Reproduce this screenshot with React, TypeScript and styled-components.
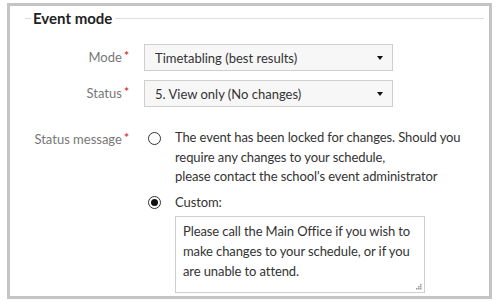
import React from "react";
import styled, { createGlobalStyle } from "styled-components";

const GlobalStyle = createGlobalStyle`
  body {
    margin: 0;
    background: #ffffff;
    font-family: Lato, "Open Sans", sans-serif;
  }
`;

const Frame = styled.div`
  box-sizing: border-box;
  width: 485px;
  height: 296px;
  margin: 3px 0 0 7px;
  border: 3px solid #c4c4c4;
  padding: 0 5px 0 15px;
`;

const Legend = styled.div`
  display: flex;
  align-items: center;
  height: 24px;
  &::before,
  &::after {
    content: "";
    height: 1px;
    background: #dedede;
  }
  &::before {
    width: 6px;
    margin-right: 2px;
  }
  &::after {
    flex: 1;
    margin-left: 3px;
  }
`;

const LegendText = styled.span`
  font-size: 15px;
  font-weight: 700;
  color: #222;
`;

const Form = styled.div`
  display: flex;
  flex-direction: column;
  margin-top: 14px;
  margin-left: -15px;
`;

const Row = styled.div<{ $gap?: number }>`
  display: flex;
  align-items: flex-start;
  gap: 15px;
  margin-top: ${(p) => p.$gap ?? 0}px;
`;

const Label = styled.div<{ $top?: number }>`
  width: 119px;
  text-align: right;
  font-size: 13px;
  color: #777;
  padding-top: ${(p) => p.$top ?? 0}px;
  line-height: 20px;
  white-space: nowrap;
`;

const Star = styled.span`
  color: #d33;
  font-size: 12px;
  font-weight: 700;
  vertical-align: 2px;
  margin-left: 2px;
`;

const Select = styled.div`
  box-sizing: border-box;
  width: 249px;
  height: 27px;
  display: flex;
  align-items: center;
  justify-content: space-between;
  padding: 0 9px 0 10px;
  background: #f7f7f7;
  border: 1px solid #cfcfcf;
  font-size: 13px;
  color: #333;
`;

const Caret = styled.span`
  width: 0;
  height: 0;
  border-left: 3.5px solid transparent;
  border-right: 3.5px solid transparent;
  border-top: 4px solid #111;
`;

const Options = styled.div`
  display: flex;
  flex-direction: column;
  padding-left: 4px;
`;

const Option = styled.div<{ $gap?: number }>`
  display: flex;
  align-items: flex-start;
  gap: 14px;
  margin-top: ${(p) => p.$gap ?? 0}px;
  font-size: 13px;
  line-height: 19.5px;
  color: #333;
  letter-spacing: -0.1px;
`;

const Radio = styled.span<{ $checked?: boolean }>`
  box-sizing: border-box;
  flex: none;
  width: 13px;
  height: 13px;
  margin-top: 3.5px;
  border-radius: 50%;
  border: 1px solid #333;
  display: flex;
  align-items: center;
  justify-content: center;
  &::after {
    content: "";
    width: 7px;
    height: 7px;
    border-radius: 50%;
    background: ${(p) => (p.$checked ? "#111" : "transparent")};
  }
`;

const TextArea = styled.div`
  position: relative;
  box-sizing: border-box;
  width: 250px;
  height: 77px;
  margin: 4px 0 0 27px;
  padding: 4px 7px;
  border: 1px solid #cfcfcf;
  font-size: 13px;
  line-height: 20px;
  color: #333;
  letter-spacing: -0.1px;
`;

const Grip = styled.svg`
  position: absolute;
  right: 2px;
  bottom: 2px;
`;

export default function App() {
  return (
    <>
      <GlobalStyle />
      <Frame>
        <Legend>
          <LegendText>Event mode</LegendText>
        </Legend>
        <Form>
          <Row>
            <Label $top={2}>
              Mode<Star>*</Star>
            </Label>
            <Select>
              Timetabling (best results)
              <Caret />
            </Select>
          </Row>
          <Row $gap={9}>
            <Label $top={2}>
              Status<Star>*</Star>
            </Label>
            <Select>
              5. View only (No changes)
              <Caret />
            </Select>
          </Row>
          <Row $gap={21}>
            <Label>
              Status message<Star>*</Star>
            </Label>
            <Options>
              <Option>
                <Radio />
                <span>
                  The event has been locked for changes. Should you
                  <br />
                  require any changes to your schedule,
                  <br />
                  please contact the school's event administrator
                </span>
              </Option>
              <Option $gap={6}>
                <Radio $checked />
                <span>Custom:</span>
              </Option>
              <TextArea>
                Please call the Main Office if you wish to make changes to your schedule, or if you
                are unable to attend.
                <Grip width="7" height="7" viewBox="0 0 7 7">
                  <rect x="5" y="1" width="1.5" height="1.5" fill="#999" />
                  <rect x="3" y="3" width="1.5" height="1.5" fill="#999" />
                  <rect x="5" y="3" width="1.5" height="1.5" fill="#999" />
                  <rect x="1" y="5" width="1.5" height="1.5" fill="#999" />
                  <rect x="3" y="5" width="1.5" height="1.5" fill="#999" />
                  <rect x="5" y="5" width="1.5" height="1.5" fill="#999" />
                </Grip>
              </TextArea>
            </Options>
          </Row>
        </Form>
      </Frame>
    </>
  );
}
